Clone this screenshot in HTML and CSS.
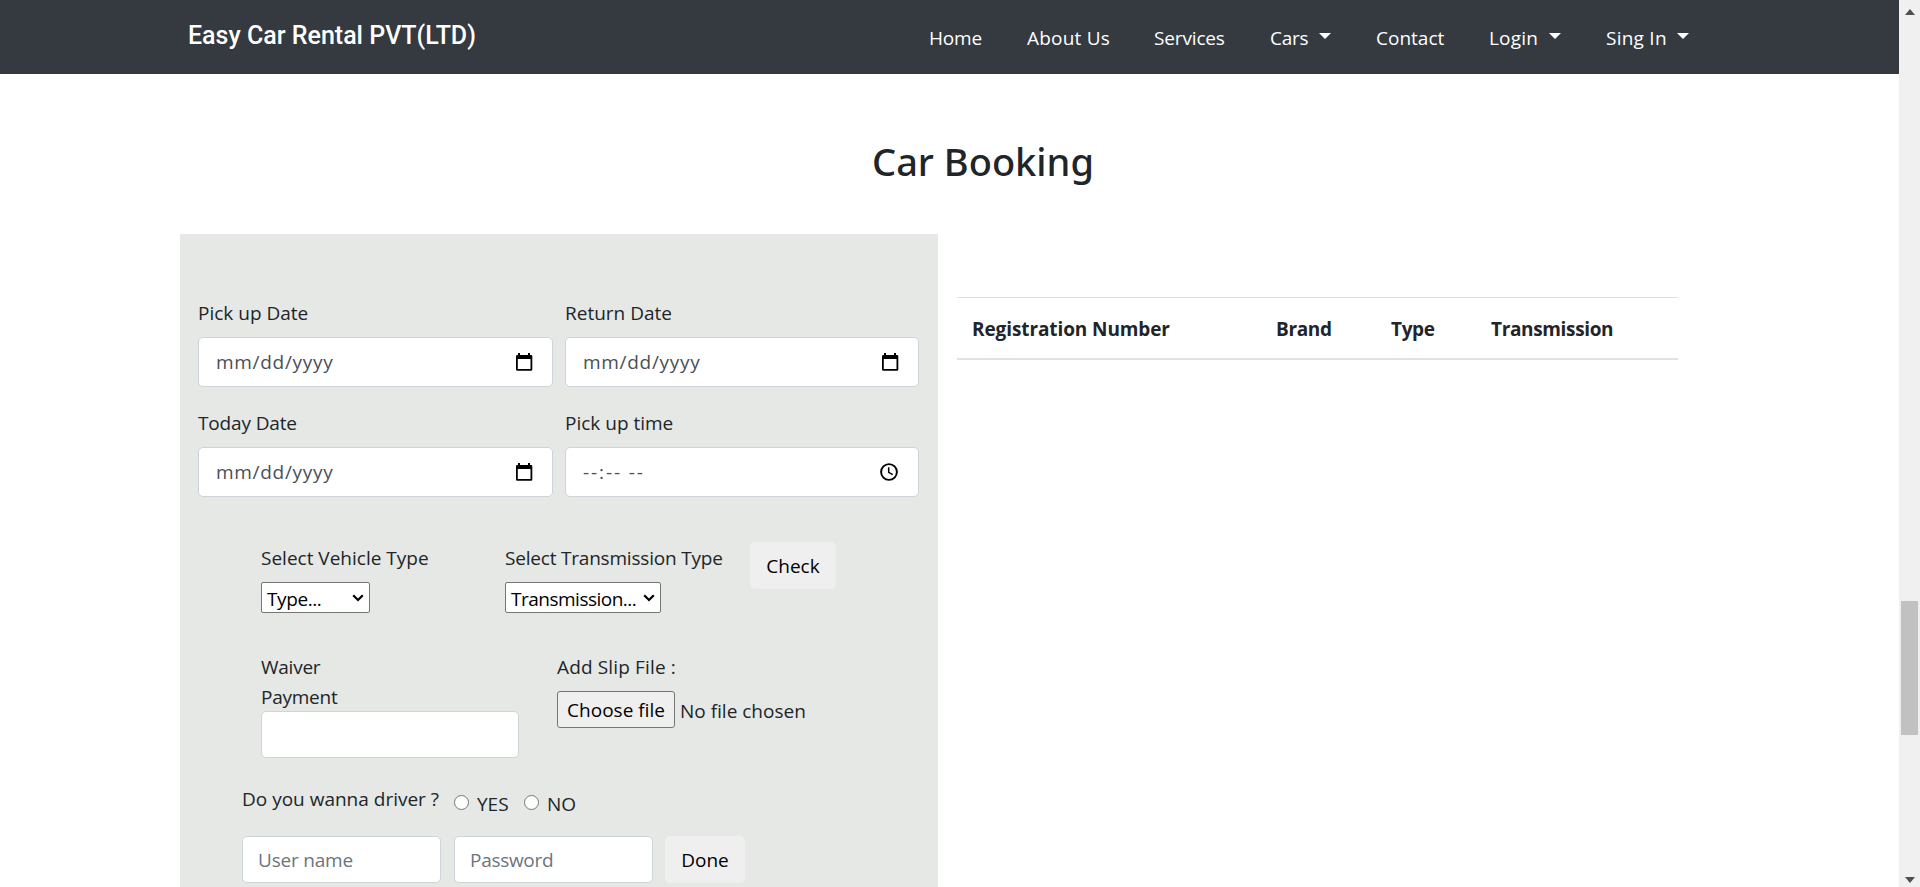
FILE: index.html
```html
<!DOCTYPE html>
<html lang="en">
<head>
<meta charset="utf-8">
<title>Easy Car Rental</title>
<link rel="stylesheet" href="styles.css">
</head>
<body>
<div class="page">
  <header class="navbar">
    <a class="brand">Easy Car Rental PVT(LTD)</a>
    <nav class="nav">
      <a class="nav-home">Home</a>
      <a class="nav-about">About Us</a>
      <a class="nav-services">Services</a>
      <a class="nav-cars">Cars<i class="caret"></i></a>
      <a class="nav-contact">Contact</a>
      <a class="nav-login">Login<i class="caret"></i></a>
      <a class="nav-sign">Sing In<i class="caret"></i></a>
    </nav>
  </header>
  <h1 class="title">Car Booking</h1>
  <main class="columns">
    <form class="panel">
      <div class="dates">
        <div class="group">
          <label class="label">Pick up Date</label>
          <div class="field"><span class="date-text">mm/dd/yyyy</span>
            <svg class="cal" viewBox="0 0 18 18"><path d="M3 0h2v2h8V0h2v2h1q1.300 0 1.300 1.300V16.500q0 1.300-1.300 1.300H2.300Q1 17.800 1 16.500V3.300Q1 2 2.300 2H3zM2.800 6v10h12.700V6z" fill-rule="evenodd"/></svg></div>
        </div>
        <div class="group">
          <label class="label">Return Date</label>
          <div class="field"><span class="date-text">mm/dd/yyyy</span>
            <svg class="cal" viewBox="0 0 18 18"><path d="M3 0h2v2h8V0h2v2h1q1.300 0 1.300 1.300V16.500q0 1.300-1.300 1.300H2.300Q1 17.800 1 16.500V3.300Q1 2 2.300 2H3zM2.800 6v10h12.700V6z" fill-rule="evenodd"/></svg></div>
        </div>
        <div class="group">
          <label class="label label-today">Today Date</label>
          <div class="field"><span class="date-text">mm/dd/yyyy</span>
            <svg class="cal" viewBox="0 0 18 18"><path d="M3 0h2v2h8V0h2v2h1q1.300 0 1.300 1.300V16.500q0 1.300-1.300 1.300H2.300Q1 17.800 1 16.500V3.300Q1 2 2.300 2H3zM2.800 6v10h12.700V6z" fill-rule="evenodd"/></svg></div>
        </div>
        <div class="group">
          <label class="label">Pick up time</label>
          <div class="field"><span class="time-text">--:-- --</span>
            <svg class="clock" viewBox="0 0 18 18" fill="none" stroke="#000"><circle cx="9" cy="9" r="7.900" stroke-width="1.900"/><path d="M8.700 4.200v5.100l4 2.400" stroke-width="1.500"/></svg></div>
        </div>
      </div>

      <div class="filters">
        <div class="filter-type">
          <label class="label">Select Vehicle Type</label>
          <div class="select select-type"><span>Type...</span><svg class="chev" viewBox="0 0 12 8"><path d="M1.200 1.200 6 6l4.800-4.800" fill="none" stroke="#000" stroke-width="2.200"/></svg></div>
        </div>
        <div class="filter-trans">
          <label class="label label-trans">Select Transmission Type</label>
          <div class="select select-trans"><span>Transmission...</span><svg class="chev" viewBox="0 0 12 8"><path d="M1.200 1.200 6 6l4.800-4.800" fill="none" stroke="#000" stroke-width="2.200"/></svg></div>
        </div>
        <button type="button" class="btn btn-check">Check</button>
      </div>

      <div class="payment">
        <div class="waiver">
          <label class="label-line">Waiver</label>
          <label class="label-line">Payment</label>
          <input class="input" type="text">
        </div>
        <div class="slip">
          <label class="label label-slip">Add Slip File :</label>
          <div class="file"><span class="file-btn">Choose file</span><span class="file-name">No file chosen</span></div>
        </div>
      </div>

      <div class="driver">
        <span class="question">Do you wanna driver ?</span>
        <span class="radio"></span><span class="option option-yes">YES</span>
        <span class="radio"></span><span class="option">NO</span>
      </div>

      <div class="account">
        <input class="input input-user" type="text" placeholder="User name">
        <input class="input input-pass" type="password" placeholder="Password">
        <button type="button" class="btn btn-done">Done</button>
      </div>
    </form>

    <div class="results">
      <span class="col-reg">Registration Number</span><span>Brand</span><span>Type</span><span>Transmission</span>
    </div>
  </main>
</div>
<aside class="scrollbar">
  <svg class="arrow" viewBox="0 0 10 6"><path d="M5 0l5 6H0z" fill="#505050"/></svg>
  <div class="thumb"></div>
  <svg class="arrow" viewBox="0 0 10 6"><path d="M0 0h10L5 6z" fill="#505050"/></svg>
</aside>
</body>
</html>
```

FILE: styles.css
```css
* { box-sizing: border-box; }
body {
  margin: 0;
  display: flex;
  height: 887px;
  overflow: hidden;
  background: #fff;
  color: #212529;
  font: 19px/32px "Open Sans", "Noto Sans", sans-serif;
}
.page { width: 1899px; height: 887px; overflow: hidden; }

.navbar {
  display: flex;
  height: 74px;
  padding-left: 188px;
  background: #343a40;
  color: #fff;
}
.brand {
  width: 741px;
  padding-top: 20px;
  font: 500 25px/32px Roboto, sans-serif;
  white-space: nowrap;
}
.nav { display: flex; padding-top: 22px; white-space: nowrap; }
.nav a { display: flex; }
.nav-home { width: 98px; letter-spacing: -0.2px; }
.nav-about { width: 127px; letter-spacing: 0.2px; }
.nav-services { width: 116px; letter-spacing: -0.15px; }
.nav-cars { width: 106px; letter-spacing: -0.3px; }
.nav-contact { width: 113px; }
.nav-login { width: 117px; letter-spacing: 0.2px; }
.nav-sign { width: 83px; letter-spacing: 0.25px; }
.caret {
  width: 12px;
  height: 6px;
  margin: 11px 0 0 auto;
  border: 6px solid transparent;
  border-top-color: #fff;
  border-bottom: 0;
}
.nav-cars .caret { margin-right: 45px; }
.nav-login .caret { margin-right: 45px; }
.nav-sign .caret { margin-right: 0; }

.title {
  margin: 0;
  padding: 59px 0 0 872px;
  height: 160px;
  font: 500 38px/56px "Noto Sans", sans-serif;
}

.columns { display: flex; gap: 19px; padding-left: 180px; }
.panel { width: 758px; height: 653px; padding: 63px 18px 0; background: #e5e8e5; }
.label, .label-line { display: block; height: 30px; white-space: nowrap; }
.label { margin-bottom: 10px; }
.label-today { letter-spacing: -0.15px; }
.label-slip { letter-spacing: 0.15px; }

.dates { display: grid; grid-template-columns: 355px 354px; gap: 20px 12px; }
.field {
  display: flex;
  align-items: center;
  height: 50px;
  padding: 0 17px;
  border: 1px solid #ced4da;
  border-radius: 5px;
  background: #fff;
  color: #495057;
}
.date-text { letter-spacing: 0.7px; }
.time-text { letter-spacing: 1.9px; }
.cal { width: 18px; height: 18px; margin: 0 2px 1px auto; }
.clock { width: 18px; height: 18px; margin: 0 3px 1px auto; }

.filters { display: flex; height: 109px; margin: 45px 0 0 63px; }
.filter-type { width: 244px; }
.filter-trans { width: 245px; }
.label-trans { letter-spacing: -0.2px; }
.select {
  display: flex;
  align-items: center;
  justify-content: space-between;
  height: 31px;
  padding: 3px 5px 0 5px;
  border: 1px solid #767676;
  border-radius: 2px;
  background: #fff;
  color: #000;
}
.select-type { width: 109px; letter-spacing: -0.4px; }
.select-trans { width: 156px; letter-spacing: -0.5px; }
.chev { width: 12px; height: 8px; margin-bottom: 3px; }
.btn {
  height: 47px;
  padding: 0;
  border: 0;
  border-radius: 5px;
  background: #efefef;
  color: #000;
  font: inherit;
}
.btn-check { width: 86px; }
.btn-done { width: 80px; margin-left: 12px; }

.payment { display: flex; margin-left: 63px; }
.waiver { width: 296px; letter-spacing: -0.25px; }
.input {
  display: block;
  width: 258px;
  height: 47px;
  padding: 1px 15px 0;
  border: 1px solid #ced4da;
  border-radius: 5px;
  background: #fff;
  font: inherit;
}
.input::placeholder { color: #6c757d; opacity: 1; }
.file { display: flex; white-space: nowrap; }
.file-btn {
  width: 118px;
  height: 37px;
  border: 1px solid #767676;
  border-radius: 3px;
  background: #efefef;
  color: #000;
  line-height: 36px;
  text-align: center;
}
.file-name { margin-left: 5px; line-height: 40px; }

.driver { display: flex; height: 53px; margin: 25px 0 0 44px; }
.question { width: 212px; }
.radio {
  width: 15px;
  height: 15px;
  margin-top: 12px;
  border: 1px solid #767676;
  border-radius: 50%;
  background: #fff;
}
.option { margin-left: 8px; padding-top: 5px; }
.option-yes { width: 47px; }

.account { display: flex; margin-left: 44px; }
.input-user { width: 199px; margin-right: 13px; letter-spacing: -0.2px; }
.input-pass { width: 199px; letter-spacing: -0.3px; }

.results {
  display: grid;
  grid-template-columns: 304px 115px 100px 1fr;
  width: 721px;
  height: 63px;
  margin-top: 63px;
  padding: 15px 0 0 15px;
  border-top: 1px solid #dee2e6;
  border-bottom: 2px solid #dee2e6;
  font-weight: 700;
  letter-spacing: -0.35px;
}
.col-reg { letter-spacing: -0.1px; }

.scrollbar {
  display: flex;
  flex-direction: column;
  align-items: center;
  width: 21px;
  padding: 9px 0 4px;
  background: #f0f0f0;
}
.arrow { width: 10px; height: 6px; }
.thumb { width: 17px; height: 134px; margin: 586px 0 auto; background: #c1c1c1; }
```
